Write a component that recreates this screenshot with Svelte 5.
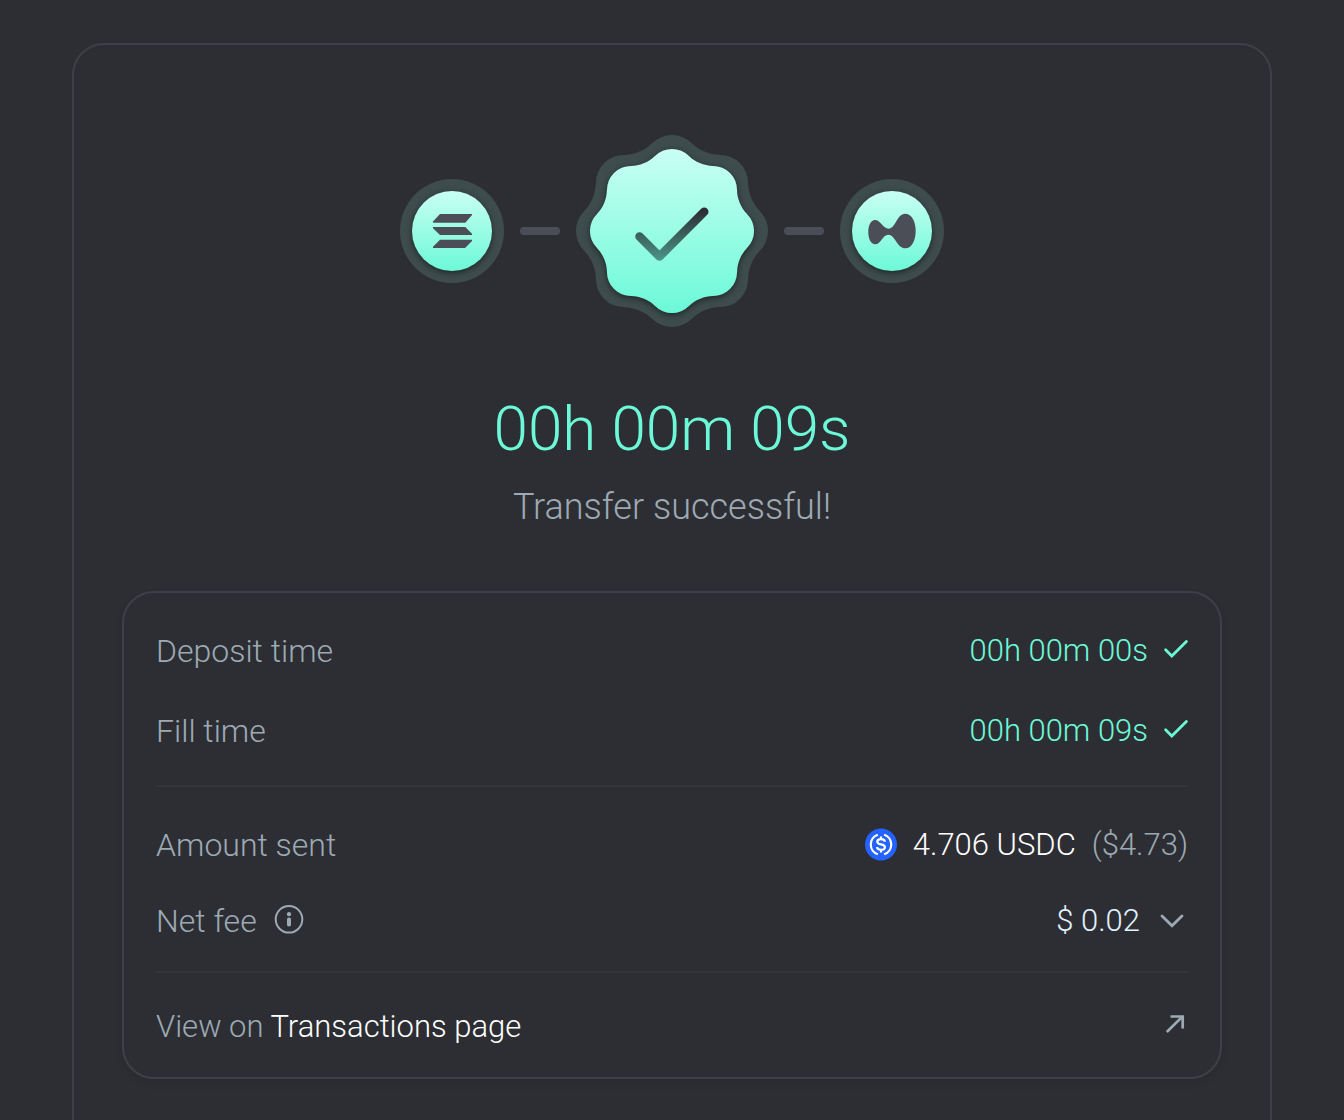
<script lang="ts">
  type Timing = { label: string; value: string };

  const elapsed = "00h 00m 09s";
  const timings: Timing[] = [
    { label: "Deposit time", value: "00h 00m 00s" },
    { label: "Fill time", value: "00h 00m 09s" },
  ];

  let feeOpen = $state(false);

  // outline of the badge around 0,0: the same lobe, turned in 45 degree steps
  function badgeOutline(scale: number): string {
    const lobes = [0, 1, 2, 3, 4, 5, 6, 7].map((step) => {
      const angle = (step * Math.PI) / 4;
      const at = (x: number, y: number) =>
        [
          (x * Math.cos(angle) - y * Math.sin(angle)) * scale,
          (x * Math.sin(angle) + y * Math.cos(angle)) * scale,
        ]
          .map((n) => n.toFixed(2))
          .join(" ");
      const r = 24 * scale;
      return `${step ? "L" : "M"}${at(-17, -75)}A${r} ${r} 0 0 1 ${at(17, -75)}C${at(23, -69)} ${at(32, -65.3)} ${at(41, -65.1)}`;
    });
    return lobes.join("") + "Z";
  }
</script>

{#snippet tick()}
  <svg width="24" height="24" viewBox="0 0 24 24" aria-hidden="true">
    <path d="M1.6 10.8L7.8 17L22.4 2.4" fill="none" stroke="currentColor" stroke-width="2.8" stroke-linecap="round" />
  </svg>
{/snippet}

{#snippet chainDisc()}
  <circle cx="52" cy="52" r="52" fill="#3e4c4d" />
  <circle class="disc" cx="52" cy="52" r="40" fill="url(#mint)" />
{/snippet}

<main class="frame">
  <div class="route">
    <svg width="104" height="104" viewBox="0 0 104 104" role="img" aria-label="Solana">
      <defs>
        <linearGradient id="mint" x1="0" y1="0" x2="0" y2="1">
          <stop offset="0" stop-color="#c9fff3" />
          <stop offset="1" stop-color="#6cf9d8" />
        </linearGradient>
      </defs>
      {@render chainDisc()}
      <g fill="#4c4e57">
        <path d="M40 35H72V36L65.3 43.7H33V42.5Z" />
        <path d="M33 48H65.3L72 54.8V56H40L33 49.2Z" />
        <path d="M40 60.7H72V61.9L65 69H33V67.8Z" />
      </g>
    </svg>
    <span class="dash"></span>
    <svg width="192" height="192" viewBox="0 0 192 192" role="img" aria-label="Completed">
      <defs>
        <linearGradient id="check" gradientUnits="userSpaceOnUse" x1="0" y1="76" x2="0" y2="126">
          <stop offset="0" stop-color="#2d2e33" />
          <stop offset="1" stop-color="#4c9788" />
        </linearGradient>
      </defs>
      <g transform="translate(96 96)">
        <path d={badgeOutline(1.17)} fill="#3e4c4d" />
        <path class="disc" d={badgeOutline(1)} fill="url(#mint)" />
      </g>
      <path d="M63.5 101.5L83.5 121.5L128.2 76.7" fill="none" stroke="url(#check)" stroke-width="8.6" stroke-linecap="round" stroke-linejoin="round" />
    </svg>
    <span class="dash"></span>
    <svg width="104" height="104" viewBox="0 0 104 104" role="img" aria-label="Hyperliquid">
      {@render chainDisc()}
      <path
        fill="#4c4e57"
        d="M28.3 53C28.3 46 31 41 35 41C40.5 41 43 49.7 48.7 49.7C55.5 49.7 57 34.7 65 34.7C72 34.7 75.7 43 75.7 51.7C75.7 61 72 69.3 65.3 69.3C57 69.3 55 55.7 48.3 55.7C42.5 55.7 41 65.3 35.3 65.3C31 65.3 28.3 60 28.3 53Z"
      />
    </svg>
  </div>

  <h1 class="elapsed">{elapsed}</h1>
  <p class="status">Transfer successful!</p>

  <section class="card">
    <div class="group">
      {#each timings as timing}
        <div class="row timing">
          <span class="label">{timing.label}</span>
          <span class="value done">{timing.value} {@render tick()}</span>
        </div>
      {/each}
    </div>

    <div class="group amounts">
      <div class="row">
        <span class="label">Amount sent</span>
        <span class="value">
          <svg width="32" height="32" viewBox="0 0 32 32" role="img" aria-label="USDC">
            <circle cx="16" cy="15.5" r="16" fill="#2563ff" />
            <g fill="none" stroke="#fff" stroke-width="2.2">
              <path d="M12.9 5.7A10.3 10.3 0 0 0 12.9 25.3M19.1 5.7A10.3 10.3 0 0 1 19.1 25.3" />
              <path d="M19.8 12.7C19.8 10.7 18.2 10.1 16 10.1C13.8 10.1 12.3 11.1 12.3 12.7C12.3 16.5 19.9 14.2 19.9 18.2C19.9 19.9 18.3 20.8 16 20.8C13.7 20.8 12.1 19.9 12.1 18.1M16 7.5V10.3M16 20.5V23.5" />
            </g>
          </svg>
          <span class="strong">4.706 USDC</span>
          <span>($4.73)</span>
        </span>
      </div>
      <div class="row">
        <span class="value label">
          Net fee
          <button type="button" aria-label="About the net fee">
            <svg width="32" height="32" viewBox="0 0 32 32" aria-hidden="true">
              <circle cx="16" cy="14.3" r="13.3" fill="none" stroke="currentColor" stroke-width="2" />
              <circle cx="16" cy="9.2" r="2.1" fill="currentColor" />
              <rect x="14" y="12.6" width="4" height="9" rx="1.8" fill="currentColor" />
            </svg>
          </button>
        </span>
        <button
          type="button"
          class="value"
          aria-expanded={feeOpen}
          onclick={() => (feeOpen = !feeOpen)}
        >
          <span class="soft">$ 0.02</span>
          <svg class="chevron" class:open={feeOpen} width="32" height="32" viewBox="0 0 32 32" aria-hidden="true">
            <path d="M6 11L16 20.8L26 11" fill="none" stroke="currentColor" stroke-width="2.8" stroke-linecap="round" />
          </svg>
        </button>
      </div>
    </div>

    <a class="row link" href="#transactions">
      <span>View on <span class="strong">Transactions page</span></span>
      <svg width="24" height="24" viewBox="0 0 24 24" aria-hidden="true">
        <path d="M2.8 17L18.4 1.6M6.5 1.5H18.7V13.5" fill="none" stroke="currentColor" stroke-width="2.7" />
      </svg>
    </a>
  </section>
</main>

<style>
  :global(body) {
    margin: 0;
    background-color: #2d2e33;
  }

  .frame {
    box-sizing: border-box;
    min-height: calc(100vh - 43px);
    margin: 43px 72px 0;
    padding: 90px 48px 40px;
    border: 2px solid #3e4047;
    border-bottom: 0;
    border-radius: 32px 32px 0 0;
    color: #9daab3;
    font-family: Roboto, "Liberation Sans", sans-serif;
    font-weight: 300;
    line-height: 40px;
  }

  .route {
    display: flex;
    align-items: center;
    justify-content: center;
    gap: 16px;
  }

  svg {
    display: block;
    overflow: visible;
  }

  .disc {
    filter: drop-shadow(0 2px 3px rgba(0, 0, 0, 0.5));
  }

  .dash {
    width: 40px;
    height: 8px;
    border-radius: 4px;
    background-color: #4c4e57;
  }

  .elapsed {
    margin: 64px 0 0;
    color: #6cf9d8;
    font-size: 62px;
    font-weight: 300;
    line-height: 76px;
    text-align: center;
  }

  .status {
    margin: 20px 0 0;
    font-size: 36px;
    line-height: 40px;
    text-align: center;
  }

  .card {
    margin-top: 64px;
    padding: 0 32px;
    border: 2px solid #3e4047;
    border-radius: 32px;
    box-shadow: 0 4px 8px rgba(0, 0, 0, 0.08);
    font-size: 31px;
  }

  .group {
    padding: 18px 0 14px;
    border-bottom: 2px solid #34353b;
  }

  .amounts {
    padding: 20px 0 12px;
  }

  .row {
    display: flex;
    align-items: center;
    justify-content: space-between;
    height: 76px;
  }

  .timing {
    height: 80px;
  }

  .label {
    font-size: 32px;
  }

  .value {
    display: flex;
    align-items: center;
    gap: 16px;
  }

  .done {
    color: #6cf9d8;
  }

  .strong {
    color: #fff;
  }

  .soft {
    color: #e0f3ff;
  }

  button {
    display: flex;
    padding: 0;
    border: 0;
    background: none;
    color: inherit;
    font: inherit;
    cursor: pointer;
  }

  .chevron.open {
    transform: rotate(180deg);
  }

  .link {
    height: 100px;
    padding-top: 4px;
    color: inherit;
    text-decoration: none;
  }
</style>
